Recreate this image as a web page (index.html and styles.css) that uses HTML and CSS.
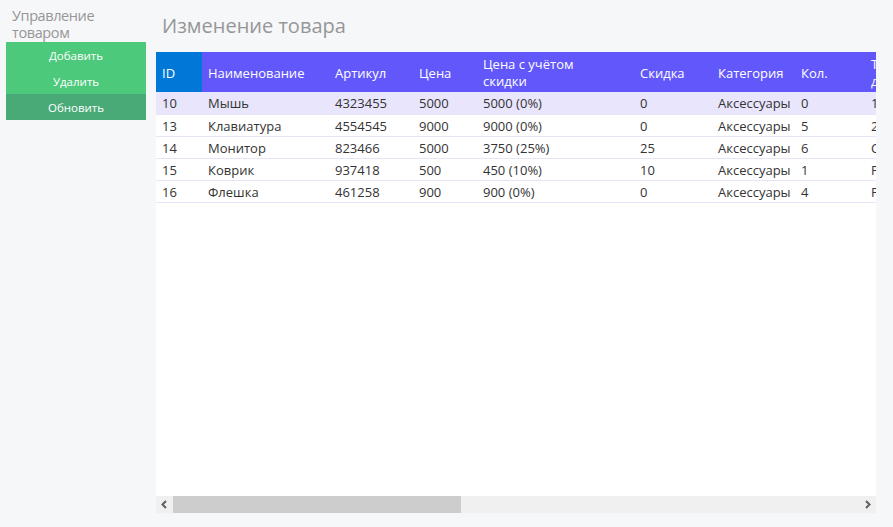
FILE: index.html
```html
<!DOCTYPE html>
<html lang="ru">
<head>
<meta charset="utf-8">
<title>Изменение товара</title>
<link rel="stylesheet" href="styles.css">
</head>
<body>
<div class="page">
  <aside class="sidebar">
    <div class="side-title">Управление товаром</div>
    <button class="btn">Добавить</button>
    <button class="btn">Удалить</button>
    <button class="btn btn-dark">Обновить</button>
  </aside>
  <main class="main">
    <h1 class="title">Изменение товара</h1>
    <div class="grid-wrap">
      <div class="grid-view">
        <table class="grid">
          <colgroup>
            <col class="c-id"><col class="c-name"><col class="c-art"><col class="c-price"><col class="c-disc-price"><col class="c-disc"><col class="c-cat"><col class="c-qty"><col class="c-del"><col class="c-maker"><col class="c-supp"><col class="c-desc"><col class="c-img"><col class="c-date">
          </colgroup>
          <thead>
            <tr>
              <th class="th-id">ID</th>
              <th>Наименование</th>
              <th>Артикул</th>
              <th>Цена</th>
              <th>Цена с учётом<br>скидки</th>
              <th>Скидка</th>
              <th>Категория</th>
              <th>Кол.</th>
              <th>Тип<br>доставки</th>
              <th>Производитель</th>
              <th>Поставщик</th>
              <th>Описание</th>
              <th>Изображение</th>
              <th>Дата</th>
            </tr>
          </thead>
          <tbody>
            <tr class="selected"><td>10</td><td>Мышь</td><td>4323455</td><td>5000</td><td>5000 (0%)</td><td>0</td><td>Аксессуары</td><td>0</td><td>1 день</td><td>Logitech</td><td>ООО Техно</td><td>Оптическая мышь</td><td>mouse.png</td><td>12.03.2023</td></tr>
            <tr><td>13</td><td>Клавиатура</td><td>4554545</td><td>9000</td><td>9000 (0%)</td><td>0</td><td>Аксессуары</td><td>5</td><td>2 дня</td><td>Logitech</td><td>ООО Техно</td><td>Механическая клавиатура</td><td>keyboard.png</td><td>14.03.2023</td></tr>
            <tr><td>14</td><td>Монитор</td><td>823466</td><td>5000</td><td>3750 (25%)</td><td>25</td><td>Аксессуары</td><td>6</td><td>Самовывоз</td><td>Samsung</td><td>ООО Техно</td><td>Монитор 24"</td><td>monitor.png</td><td>15.03.2023</td></tr>
            <tr><td>15</td><td>Коврик</td><td>937418</td><td>500</td><td>450 (10%)</td><td>10</td><td>Аксессуары</td><td>1</td><td>Рюкзак-курьер</td><td>Defender</td><td>ООО Техно</td><td>Коврик для мыши</td><td>pad.png</td><td>16.03.2023</td></tr>
            <tr><td>16</td><td>Флешка</td><td>461258</td><td>900</td><td>900 (0%)</td><td>0</td><td>Аксессуары</td><td>4</td><td>Рюкзак-курьер</td><td>Kingston</td><td>ООО Техно</td><td>USB 32 ГБ</td><td>flash.png</td><td>17.03.2023</td></tr>
          </tbody>
        </table>
      </div>
      <div class="hscroll">
        <div class="hs-btn"><svg width="17" height="17" viewBox="0 0 17 17"><path d="M10 5 L6.5 8.5 L10 12" fill="none" stroke="#606060" stroke-width="2"/></svg></div>
        <div class="hs-thumb"></div>
        <div class="hs-track"></div>
        <div class="hs-btn"><svg width="17" height="17" viewBox="0 0 17 17"><path d="M7 5 L10.5 8.5 L7 12" fill="none" stroke="#606060" stroke-width="2"/></svg></div>
      </div>
    </div>
  </main>
</div>
</body>
</html>
```
FILE: styles.css
```css
* { box-sizing: border-box; }
html, body { margin: 0; padding: 0; }
body {
  background: #f6f7f9;
  font-family: "Open Sans", "Noto Sans", sans-serif;
  color: #333;
  width: 893px;
  height: 527px;
  overflow: hidden;
}
.page {
  display: flex;
  gap: 10px;
  padding: 6px 17px 14px 6px;
  height: 527px;
}
.sidebar {
  width: 140px;
  flex: none;
  display: flex;
  flex-direction: column;
}
.side-title {
  font-size: 14.5px;
  letter-spacing: -0.4px;
  line-height: 17px;
  color: #969696;
  padding: 1px 6px 0;
  margin-bottom: 1px;
}
.btn {
  border: 0;
  margin: 0;
  height: 26px;
  background: #4cc97b;
  color: #fff;
  font-family: inherit;
  font-size: 11.5px;
  padding: 0;
  text-align: center;
}
.btn-dark { background: #49aa78; }
.main {
  flex: 1;
  min-width: 0;
  display: flex;
  flex-direction: column;
}
.title {
  margin: 8px 0 14px;
  padding: 0 6px;
  font-weight: normal;
  font-size: 20px;
  line-height: 24px;
  color: #969696;
}
.grid-wrap {
  flex: 1;
  background: #fff;
  display: flex;
  flex-direction: column;
  min-height: 0;
}
.grid-view {
  flex: 1;
  overflow: hidden;
}
.grid {
  table-layout: fixed;
  width: 1715px;
  border-collapse: collapse;
  font-size: 13px;
}
.c-id { width: 46px; }
.c-name { width: 127px; }
.c-art { width: 84px; }
.c-price { width: 64px; }
.c-disc-price { width: 157px; }
.c-disc { width: 78px; }
.c-cat { width: 83px; }
.c-qty { width: 70px; }
.c-del { width: 150px; }
.c-maker { width: 160px; }
.c-supp { width: 150px; }
.c-desc { width: 250px; }
.c-img { width: 150px; }
.c-date { width: 146px; }
.grid th {
  background: #6257fb;
  color: #fff;
  font-weight: normal;
  text-align: left;
  height: 40px;
  padding: 3px 6px 1px;
  line-height: 17px;
  vertical-align: middle;
  white-space: nowrap;
}
.grid th.th-id { background: #0078d7; }
.grid td {
  height: 22px;
  padding: 2px 6px 0;
  line-height: 19px;
  border-bottom: 1px solid #e6e4f7;
  white-space: nowrap;
  overflow: hidden;
}
.grid tr.selected td { background: #e8e5fc; }
.hscroll {
  flex: none;
  height: 17px;
  display: flex;
  background: #f0f0f0;
}
.hs-btn {
  width: 17px;
  height: 17px;
  flex: none;
}
.hs-btn svg { display: block; }
.hs-thumb {
  width: 288px;
  flex: none;
  background: #cdcdcd;
}
.hs-track { flex: 1; }
```
